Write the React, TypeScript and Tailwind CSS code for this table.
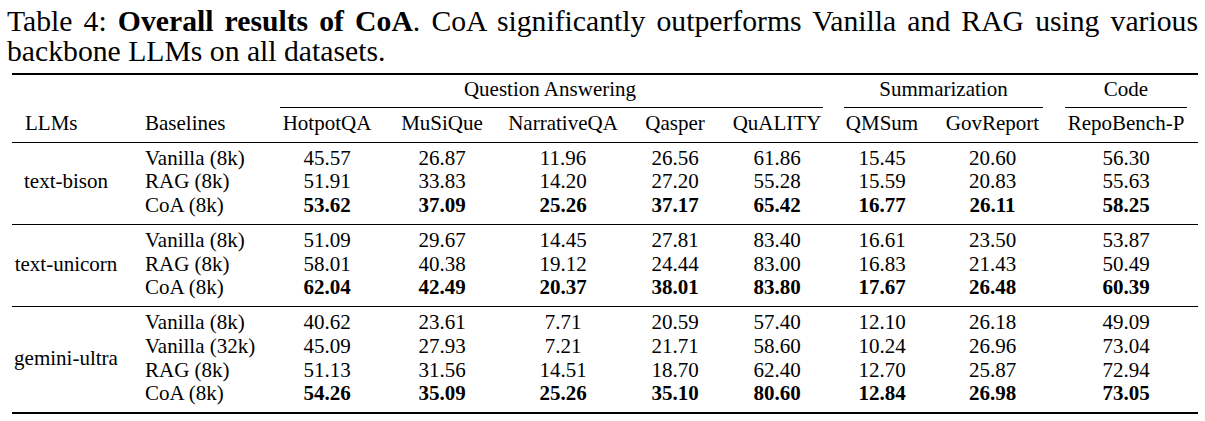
import React from 'react';

type Row = { base: string; vals: string[]; bold?: boolean };
type Group = { llm: string; rows: Row[] };

const groups: Group[] = [
  {
    llm: 'text-bison',
    rows: [
      { base: 'Vanilla (8k)', vals: ['45.57', '26.87', '11.96', '26.56', '61.86', '15.45', '20.60', '56.30'] },
      { base: 'RAG (8k)', vals: ['51.91', '33.83', '14.20', '27.20', '55.28', '15.59', '20.83', '55.63'] },
      { base: 'CoA (8k)', vals: ['53.62', '37.09', '25.26', '37.17', '65.42', '16.77', '26.11', '58.25'], bold: true },
    ],
  },
  {
    llm: 'text-unicorn',
    rows: [
      { base: 'Vanilla (8k)', vals: ['51.09', '29.67', '14.45', '27.81', '83.40', '16.61', '23.50', '53.87'] },
      { base: 'RAG (8k)', vals: ['58.01', '40.38', '19.12', '24.44', '83.00', '16.83', '21.43', '50.49'] },
      { base: 'CoA (8k)', vals: ['62.04', '42.49', '20.37', '38.01', '83.80', '17.67', '26.48', '60.39'], bold: true },
    ],
  },
  {
    llm: 'gemini-ultra',
    rows: [
      { base: 'Vanilla (8k)', vals: ['40.62', '23.61', '7.71', '20.59', '57.40', '12.10', '26.18', '49.09'] },
      { base: 'Vanilla (32k)', vals: ['45.09', '27.93', '7.21', '21.71', '58.60', '10.24', '26.96', '73.04'] },
      { base: 'RAG (8k)', vals: ['51.13', '31.56', '14.51', '18.70', '62.40', '12.70', '25.87', '72.94'] },
      { base: 'CoA (8k)', vals: ['54.26', '35.09', '25.26', '35.10', '80.60', '12.84', '26.98', '73.05'], bold: true },
    ],
  },
];

const datasets = ['HotpotQA', 'MuSiQue', 'NarrativeQA', 'Qasper', 'QuALITY', 'QMSum', 'GovReport', 'RepoBench-P'];

// column widths taken from the printed table
const cols = 'grid grid-cols-[108px_147px_120px_110px_132px_92px_112px_98px_123px_144px]';

function GroupRows({ group }: { group: Group }) {
  const span = group.rows.length === 4 ? 'row-span-4' : 'row-span-3';
  return (
    <div className={`${cols} pt-[4px] pb-[6px]`}>
      <div className={`${span} flex items-center justify-center`}>{group.llm}</div>
      {group.rows.map((r) => (
        <React.Fragment key={r.base}>
          <div className="pl-[25px]">{r.base}</div>
          {r.vals.map((v, i) => (
            <div key={i} className={r.bold ? 'text-center font-bold' : 'text-center'}>
              {v}
            </div>
          ))}
        </React.Fragment>
      ))}
    </div>
  );
}

export default function App() {
  return (
    <div className="w-[1205px] h-[421px] overflow-hidden bg-white text-black font-['Liberation_Serif',serif]">
      <div className="px-[7px] pt-[6px] text-[29.7px] leading-[30px]">
        <div className="text-justify [text-align-last:justify]">
          Table 4: <span className="font-bold">Overall results of CoA</span>. CoA significantly outperforms Vanilla and RAG using various
        </div>
        <div>backbone LLMs on all datasets.</div>
      </div>

      <div className="ml-[12px] mt-[7px] w-[1186px] text-[21px] leading-[23.75px]">
        <div className="h-[2px] bg-black" />

        <div className={`${cols} pt-[3px] pb-[5px]`}>
          <div className="col-span-2" />
          <div className="col-span-5 text-center">Question Answering</div>
          <div className="col-span-2 text-center">Summarization</div>
          <div className="text-center">Code</div>
        </div>

        <div className={`${cols} h-[1px]`}>
          <div className="col-span-2" />
          <div className="col-span-5 ml-[13px] mr-[10px] bg-black" />
          <div className="col-span-2 ml-[11px] mr-[11px] bg-black" />
          <div className="ml-[11px] mr-[11px] bg-black" />
        </div>

        <div className={`${cols} pt-[4px] pb-[6px]`}>
          <div className="pl-[13px]">LLMs</div>
          <div className="pl-[25px]">Baselines</div>
          {datasets.map((d) => (
            <div key={d} className="text-center">
              {d}
            </div>
          ))}
        </div>

        <div className="h-[1px] bg-black" />
        <GroupRows group={groups[0]} />
        <div className="h-[1px] bg-black" />
        <GroupRows group={groups[1]} />
        <div className="h-[1px] bg-black" />
        <GroupRows group={groups[2]} />
        <div className="h-[2px] bg-black" />
      </div>
    </div>
  );
}
